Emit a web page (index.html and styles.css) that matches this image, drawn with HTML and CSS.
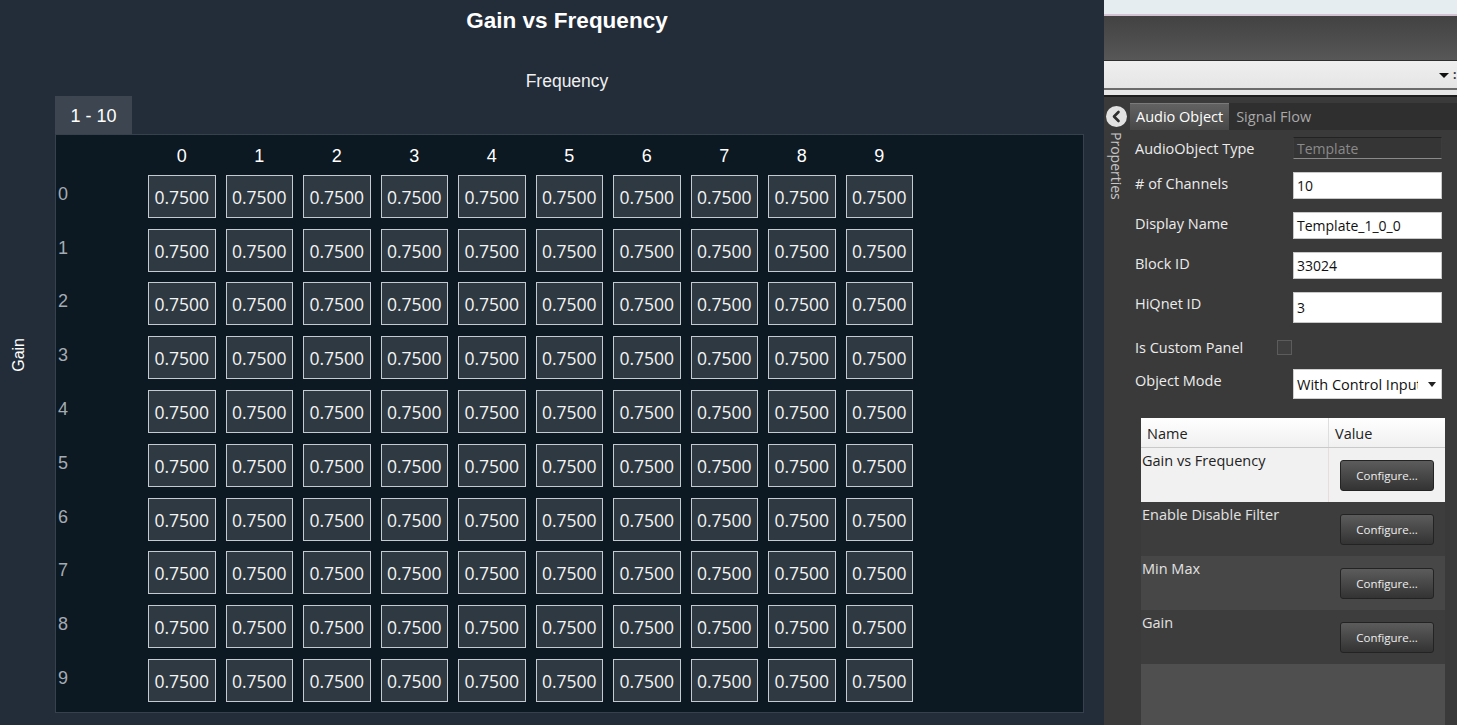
FILE: index.html
```html
<!DOCTYPE html>
<html lang="en">
<head>
    <meta charset="UTF-8">
    <title>Gain vs Frequency</title>
    <link rel="stylesheet" href="styles.css">
</head>
<body>
    <div class="editor">
        <div class="axis-y"><span>Gain</span></div>
        <div class="editor-main">
            <div class="title">Gain vs Frequency</div>
            <div class="axis-x">Frequency</div>
            <div class="page-tab">1 - 10</div>
            <div class="matrix" id="matrix"></div>
        </div>
    </div>

    <div class="props">
        <div class="props-strip"></div>
        <div class="props-toolbar"></div>
        <div class="props-drop"><span class="caret"></span><span class="drop-cut">:</span></div>
        <div class="props-under"></div>

        <div class="props-body">
            <div class="side-tab">
                <div class="collapse-btn">
                    <svg width="21" height="21" viewBox="0 0 21 21"><path d="M12.5 6 L8 10.5 L12.5 15" fill="none" stroke="#2e2e2e" stroke-width="2.6" stroke-linecap="round" stroke-linejoin="round"/></svg>
                </div>
                <div class="side-label">Properties</div>
            </div>

            <div class="props-main">
                <div class="tabs">
                    <div class="tab active">Audio Object</div>
                    <div class="tab">Signal Flow</div>
                </div>

                <div class="form">
                    <div class="field">
                        <label>AudioObject Type</label>
                        <div class="input disabled">Template</div>
                    </div>
                    <div class="field">
                        <label># of Channels</label>
                        <div class="input">10</div>
                    </div>
                    <div class="field">
                        <label>Display Name</label>
                        <div class="input">Template_1_0_0</div>
                    </div>
                    <div class="field">
                        <label>Block ID</label>
                        <div class="input">33024</div>
                    </div>
                    <div class="field">
                        <label>HiQnet ID</label>
                        <div class="input tall">3</div>
                    </div>
                    <div class="field check-row">
                        <label>Is Custom Panel</label>
                        <div class="checkbox"></div>
                    </div>
                    <div class="field last">
                        <label>Object Mode</label>
                        <div class="select"><span class="select-text">With Control Input</span><span class="select-caret"></span></div>
                    </div>
                </div>

                <div class="grid-table">
                    <div class="thead">
                        <div class="th name">Name</div>
                        <div class="th">Value</div>
                    </div>
                    <div class="tr selected">
                        <div class="td name">Gain vs Frequency</div>
                        <div class="td value"><div class="btn">Configure...</div></div>
                    </div>
                    <div class="tr">
                        <div class="td name">Enable Disable Filter</div>
                        <div class="td value"><div class="btn">Configure...</div></div>
                    </div>
                    <div class="tr alt">
                        <div class="td name">Min Max</div>
                        <div class="td value"><div class="btn">Configure...</div></div>
                    </div>
                    <div class="tr">
                        <div class="td name">Gain</div>
                        <div class="td value"><div class="btn">Configure...</div></div>
                    </div>
                </div>
            </div>
        </div>
    </div>

    <script>
        const matrix = document.getElementById('matrix');
        let html = '<div></div>';
        for (let c = 0; c < 10; c++) {
            html += `<div class="col-head">${c}</div>`;
        }
        for (let r = 0; r < 10; r++) {
            html += `<div class="row-head">${r}</div>`;
            for (let c = 0; c < 10; c++) {
                html += '<div class="cell">0.7500</div>';
            }
        }
        matrix.innerHTML = html;
    </script>
</body>
</html>
```

FILE: styles.css
```css
* {
    box-sizing: border-box;
}

body {
    margin: 0;
    display: flex;
    height: 725px;
    overflow: hidden;
    background-color: #232d39;
    font-family: "Liberation Sans", Arial, sans-serif;
}

/* left: matrix editor */
.editor {
    width: 1104px;
    flex-shrink: 0;
    display: flex;
    background-color: #232d39;
    color: #ffffff;
}

.axis-y {
    width: 55px;
    display: flex;
    align-items: center;
    padding: 0 0 15px 10px;
}

.axis-y span {
    writing-mode: vertical-rl;
    transform: rotate(180deg);
    font-size: 16px;
}

.editor-main {
    width: 1029px;
    display: flex;
    flex-direction: column;
}

.title {
    margin: 8px 5px 0 0;
    text-align: center;
    font-size: 22.5px;
    font-weight: bold;
    line-height: 26px;
}

.axis-x {
    margin: 36px 5px 0 0;
    text-align: center;
    font-size: 17.5px;
    line-height: 22px;
    color: #f0f0f0;
}

.page-tab {
    margin-top: 4px;
    width: 77px;
    height: 38px;
    padding-top: 2px;
    background-color: #3c4550;
    display: flex;
    align-items: center;
    justify-content: center;
    font-size: 18px;
}

.matrix {
    height: 579px;
    background-color: #0c1822;
    border: 1px solid #36414d;
    padding-left: 2px;
    display: grid;
    grid-template-columns: 80px repeat(10, 67.5px);
    grid-template-rows: 29px repeat(10, 43px);
    column-gap: 10px;
    row-gap: 10.8px;
    align-content: start;
}

.col-head {
    align-self: end;
    line-height: 16px;
    padding-top: 1px;
    text-align: center;
    font-size: 18px;
}

.row-head {
    padding-top: 8px;
    font-size: 18px;
    line-height: 22px;
    color: #a4abb2;
}

.cell {
    background-color: #2e3942;
    border: 1px solid #c3cbd0;
    display: flex;
    align-items: center;
    justify-content: center;
    padding-top: 1px;
    font-family: "Open Sans", sans-serif;
    font-size: 17.5px;
    color: #f4f4f4;
}

/* right: properties panel */
.props {
    flex: 1;
    display: flex;
    flex-direction: column;
    background-color: #3a3a3a;
    font-family: "Open Sans", sans-serif;
    color: #e8e8e8;
}

.props-strip {
    height: 16px;
    background-color: #e6edf0;
    border-bottom: 2px solid #d2c3d3;
}

.props-toolbar {
    height: 45px;
    background: linear-gradient(#424242, #575757);
    border-bottom: 1px solid #2e2e2e;
}

.props-drop {
    height: 29px;
    background: linear-gradient(#efefef, #e5e5e5);
    border-bottom: 2px solid #6b6b6b;
    display: flex;
    align-items: center;
    justify-content: flex-end;
    overflow: hidden;
}

.caret {
    width: 0;
    height: 0;
    margin-top: 2px;
    border-left: 5px solid transparent;
    border-right: 5px solid transparent;
    border-top: 5px solid #111111;
}

.drop-cut {
    width: 4px;
    margin-left: 4px;
    font-size: 12px;
    font-weight: bold;
    color: #333333;
}

.props-under {
    height: 7px;
    background-color: #e7e7e7;
    border-bottom: 2px solid #1e1e1e;
}

.props-body {
    flex: 1;
    min-height: 0;
    display: flex;
    padding-top: 6px;
}

.side-tab {
    width: 24px;
    display: flex;
    flex-direction: column;
    align-items: center;
}

.collapse-btn {
    margin-top: 3px;
    width: 21px;
    height: 21px;
    border-radius: 50%;
    background-color: #e2e2e2;
}

.collapse-btn svg {
    display: block;
}

.side-label {
    margin-top: 5px;
    writing-mode: vertical-rl;
    font-size: 14px;
    color: #c6c6c6;
}

.props-main {
    flex: 1;
    display: flex;
    flex-direction: column;
}

.tabs {
    display: flex;
    height: 27px;
    margin-left: 2px;
    background-color: #2f2f2f;
}

.tab {
    padding: 0 7px;
    font-size: 14.5px;
    line-height: 27px;
    color: #a9a9a9;
}

.tab.active {
    padding: 0 6px;
    background: linear-gradient(#626262, #474747);
    border-top: 1px solid #7a7a7a;
    line-height: 25px;
    color: #ffffff;
}

.form {
    padding: 7px 0 0 7px;
    display: flex;
    flex-direction: column;
}

.field {
    display: flex;
    align-items: flex-start;
    margin-bottom: 13px;
}

.field.check-row {
    margin-bottom: 11px;
}

.field.last {
    margin-bottom: 0;
}

.field label {
    width: 142px;
    padding-top: 2px;
    font-size: 14.5px;
    line-height: 20px;
    color: #ececec;
}

.input {
    margin-left: 16px;
    width: 149px;
    height: 27px;
    background-color: #ffffff;
    border: 1px solid #c8c8c8;
    padding: 0 3px;
    display: flex;
    align-items: center;
    font-size: 14px;
    color: #111111;
}

.input.tall {
    height: 31px;
}

.input.disabled {
    height: 22px;
    background-color: #353535;
    border-color: #222222 #3c3c3c #8a8a8a;
    color: #8a8a8a;
}

.checkbox {
    align-self: center;
    width: 15px;
    height: 15px;
    border: 1px solid #5c5c5c;
    background-color: #3f3f3f;
}

.select {
    margin-left: 16px;
    width: 149px;
    height: 30px;
    background-color: #ffffff;
    border: 1px solid #cfcfcf;
    display: flex;
    align-items: center;
    padding-left: 3px;
    font-size: 14.5px;
    color: #111111;
}

.select-text {
    width: 121px;
    overflow: hidden;
    white-space: nowrap;
}

.select-caret {
    margin-left: 10px;
    width: 0;
    height: 0;
    border-left: 4px solid transparent;
    border-right: 4px solid transparent;
    border-top: 5px solid #222222;
}

.grid-table {
    flex: 1;
    margin: 19px 12px 0 13px;
    background-color: #4f4f4f;
    display: flex;
    flex-direction: column;
}

.thead {
    height: 30px;
    display: flex;
    background: linear-gradient(#ffffff, #f0f0f0);
    border-bottom: 1px solid #c9c9c9;
    color: #222222;
}

.th {
    padding: 2px 0 0 6px;
    font-size: 14.5px;
    line-height: 27px;
}

.th.name {
    width: 188px;
    border-right: 1px solid #dedede;
}

.tr {
    height: 54px;
    display: flex;
    background-color: #3d3d3d;
    color: #e2e2e2;
}

.tr.alt {
    background-color: #474747;
}

.tr.selected {
    background-color: #f1f1f1;
    color: #222222;
}

.td.name {
    width: 188px;
    padding: 3px 0 0 1px;
    font-size: 14.5px;
    line-height: 20px;
}

.tr.selected .td.name {
    border-right: 1px solid #eadcd8;
}

.td.value {
    flex: 1;
    display: flex;
    justify-content: center;
    padding-top: 12px;
}

.btn {
    width: 94px;
    height: 31px;
    border-radius: 3px;
    background: linear-gradient(#5c5c5c, #333333);
    border: 1px solid #232323;
    display: flex;
    align-items: center;
    justify-content: center;
    font-size: 11.5px;
    color: #eeeeee;
}
```
